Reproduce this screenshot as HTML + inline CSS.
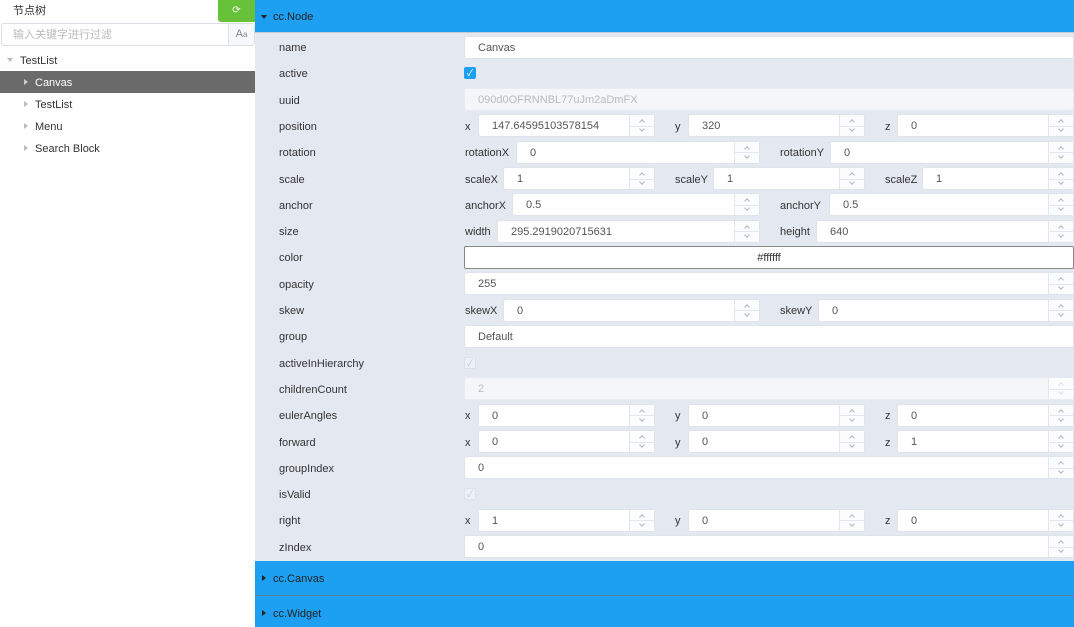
<!DOCTYPE html>
<html><head><meta charset="utf-8"><style>
*{box-sizing:border-box;margin:0;padding:0}
body{width:1074px;height:627px;overflow:hidden;font-family:"Liberation Sans","Noto Sans CJK SC",sans-serif;font-size:11px;color:#333;background:#fff;position:relative}
.a{position:absolute}
.lbl{position:absolute;font-size:11px;color:#333;line-height:14px}
.in{position:absolute;height:23px;background:#fff;border:1px solid #dfe3ea;border-radius:3px;font-size:11px;line-height:22px;padding-left:13px;color:#555}
.dis{background:#f4f6f9;color:#bbb;border-color:#e8ebf0}
.sp{position:absolute;right:0;top:0;width:25px;height:100%;border-left:1px solid #e3e6ec;background:#fbfcfd}
.sp:after{content:"";position:absolute;left:0;right:0;top:50%;border-top:1px solid #e3e6ec}
.sp i,.sp b{position:absolute;left:10px;width:4px;height:4px;border-left:1px solid #b5b5b5;border-top:1px solid #b5b5b5}
.sp i{top:5px;transform:rotate(45deg)}
.sp b{bottom:5px;transform:rotate(225deg)}
.dis .sp i,.dis .sp b{border-color:#e0e0e0}
.tri{position:absolute;width:0;height:0;border-top:3px solid transparent;border-bottom:3px solid transparent;border-left:4px solid #bbb}
</style></head><body>
<div class="a" style="left:0;top:0;width:255px;height:627px;background:#fff"></div>
<div class="lbl" style="left:13px;top:4px">节点树</div>
<div class="a" style="left:218px;top:0;width:37px;height:22px;background:#67c23a;border-radius:0 0 0 3px;color:#fff;text-align:center;line-height:22px;font-size:10px">⟳</div>
<div class="a" style="left:1px;top:23px;width:254px;height:23px;border:1px solid #dcdfe6;border-radius:3px"></div>
<div class="lbl" style="left:13px;top:28px;color:#bbb">输入关键字进行过滤</div>
<div class="a" style="left:228px;top:24px;width:26px;height:21px;background:#f5f7fa;border-left:1px solid #dcdfe6;color:#888;text-align:center;line-height:21px;font-size:11px">A<span style="font-size:8px">a</span></div>
<div class="a" style="left:7px;top:58px;width:0;height:0;border-left:3px solid transparent;border-right:3px solid transparent;border-top:4px solid #bbb"></div>
<div class="lbl" style="left:20px;top:54px">TestList</div>
<div class="a" style="left:0;top:71px;width:255px;height:22px;background:#6a6a6a"></div>
<div class="tri" style="left:24px;top:79px;border-left-color:#ccc"></div>
<div class="lbl" style="left:35px;top:76px;color:#fff">Canvas</div>
<div class="tri" style="left:24px;top:101px"></div><div class="lbl" style="left:35px;top:98px">TestList</div>
<div class="tri" style="left:24px;top:123px"></div><div class="lbl" style="left:35px;top:120px">Menu</div>
<div class="tri" style="left:24px;top:145px"></div><div class="lbl" style="left:35px;top:142px">Search Block</div>

<div class="a" style="left:255px;top:0;width:819px;height:627px;background:#e4e8f1"></div>
<div class="a" style="left:255px;top:0;width:819px;height:33px;background:#1ea0f2;border-bottom:1px solid #c5ccd6"></div>
<div class="a" style="left:261px;top:15px;border-left:3px solid transparent;border-right:3px solid transparent;border-top:4px solid #222"></div>
<div class="lbl" style="left:273px;top:10px;color:#222">cc.Node</div>
<div class="a" style="left:255px;top:561px;width:819px;height:34px;background:#1ea0f2"></div>
<div class="a" style="left:255px;top:595px;width:819px;height:1px;background:#5a7da0"></div>
<div class="a" style="left:255px;top:596px;width:819px;height:31px;background:#1ea0f2"></div>
<div class="a" style="left:262px;top:575px;border-top:3px solid transparent;border-bottom:3px solid transparent;border-left:4px solid #222"></div>
<div class="lbl" style="left:273px;top:572px;color:#222">cc.Canvas</div>
<div class="a" style="left:262px;top:610px;border-top:3px solid transparent;border-bottom:3px solid transparent;border-left:4px solid #222"></div>
<div class="lbl" style="left:273px;top:607px;color:#222">cc.Widget</div>
<div id="rows"></div>
<script>
var R=document.getElementById('rows'),h='';
function Y(i){return 47+26.3*i}
function inp(x1,x2,y,v,sp,dis){h+='<div class="in'+(dis?' dis':'')+'" style="left:'+x1+'px;top:'+(y-11.5)+'px;width:'+(x2-x1)+'px">'+v+(sp?'<div class="sp"><i></i><b></b></div>':'')+'</div>'}
function lab(x,y,t){h+='<div class="lbl" style="left:'+x+'px;top:'+(y-6)+'px">'+t+'</div>'}
function chk(y,on){h+='<div class="a" style="left:464px;top:'+(y-6)+'px;width:12px;height:12px;border-radius:2px;background:'+(on?'#1ea0f2':'#edf0f4')+';border:1px solid '+(on?'#1ea0f2':'#dde1e8')+';color:'+(on?'#fff':'#c8ccd3')+';font-size:9px;line-height:10px;text-align:center">✓</div>'}
function three(y,a,l,s){s=s||[478,688,897];var lx=[465,675,885];for(var k=0;k<3;k++){lab(lx[k],y,l[k]);inp(s[k],k==2?1074:(k==0?655:865),y,a[k],1)}}
function two(y,a,l,s){lab(465,y,l[0]);inp(s[0],760,y,a[0],1);lab(780,y,l[1]);inp(s[1],1074,y,a[1],1)}
var names=['name','active','uuid','position','rotation','scale','anchor','size','color','opacity','skew','group','activeInHierarchy','childrenCount','eulerAngles','forward','groupIndex','isValid','right','zIndex'];
names.forEach(function(n,i){lab(279,Y(i),n)});
inp(464,1074,Y(0),'Canvas',0);
chk(Y(1),1);
inp(464,1074,Y(2),'090d0OFRNNBL77uJm2aDmFX',0,1);
three(Y(3),['147.64595103578154','320','0'],['x','y','z']);
two(Y(4),['0','0'],['rotationX','rotationY'],[516,830]);
three(Y(5),['1','1','1'],['scaleX','scaleY','scaleZ'],[503,713,922]);
two(Y(6),['0.5','0.5'],['anchorX','anchorY'],[512,829]);
two(Y(7),['295.2919020715631','640'],['width','height'],[497,816]);
h+='<div class="a" style="left:464px;top:'+(Y(8)-11.5)+'px;width:610px;height:23px;background:#fff;border:1px solid #888;border-radius:2px;text-align:center;line-height:22px;font-size:11px;color:#333">#ffffff</div>';
inp(464,1074,Y(9),'255',1);
two(Y(10),['0','0'],['skewX','skewY'],[503,818]);
inp(464,1074,Y(11),'Default',0);
chk(Y(12),0);
inp(464,1074,Y(13),'2',1,1);
three(Y(14),['0','0','0'],['x','y','z']);
three(Y(15),['0','0','1'],['x','y','z']);
inp(464,1074,Y(16),'0',1);
chk(Y(17),0);
three(Y(18),['1','0','0'],['x','y','z']);
inp(464,1074,Y(19),'0',1);
R.innerHTML=h;
</script>
</body></html>
